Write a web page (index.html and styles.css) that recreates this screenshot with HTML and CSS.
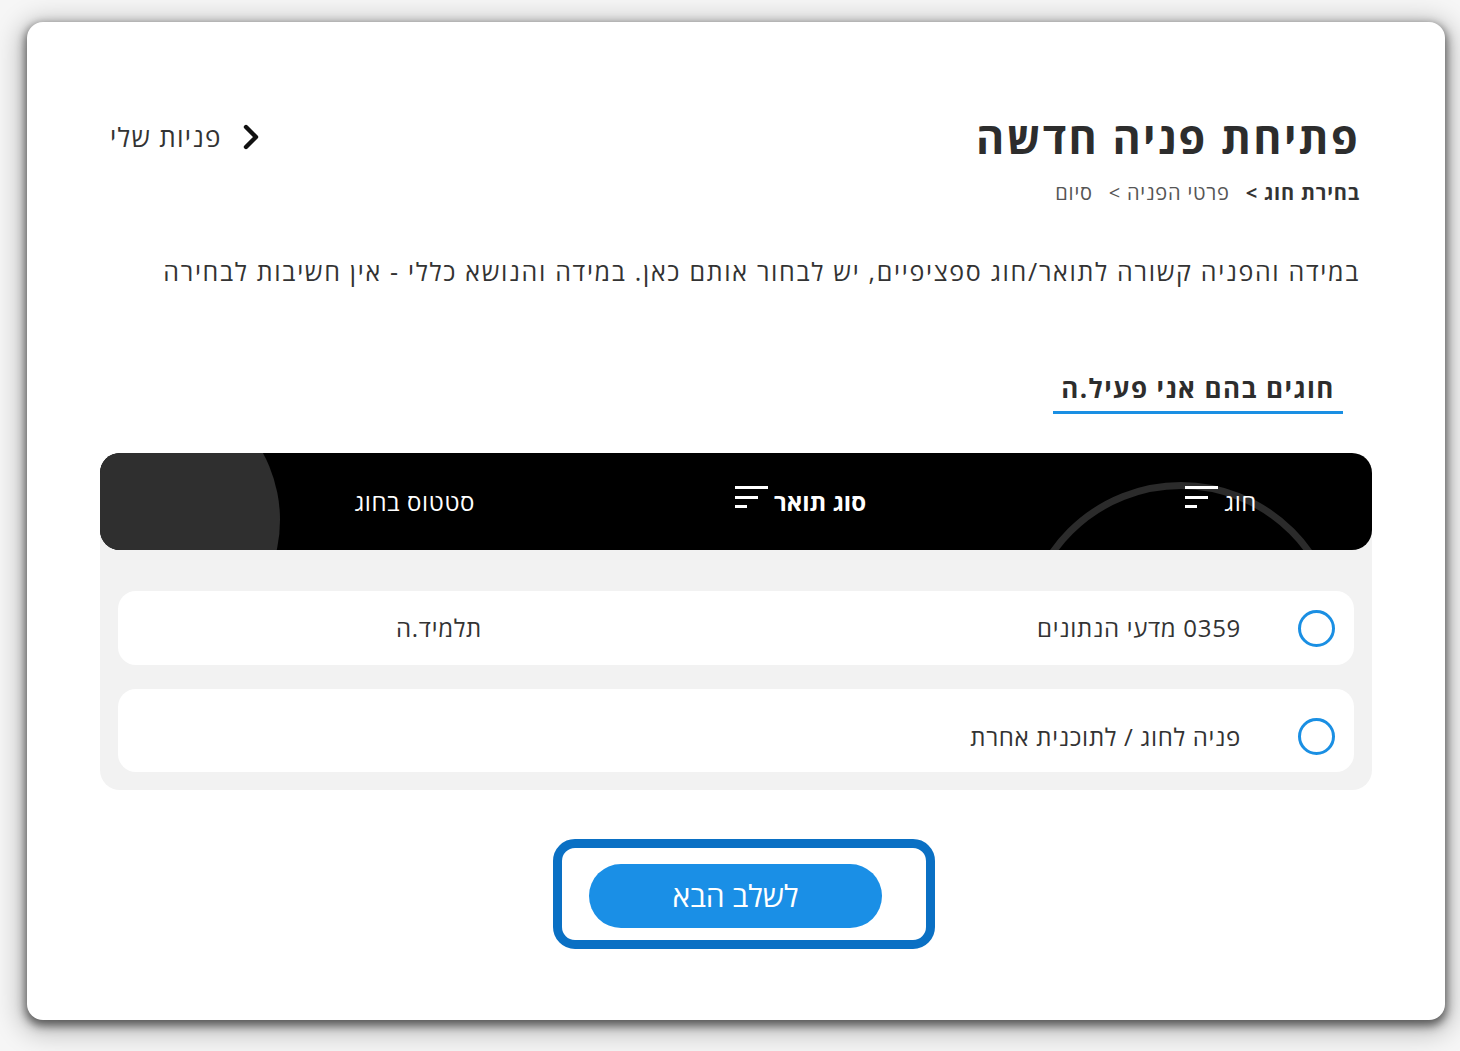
FILE: index.html
```html
<!DOCTYPE html>
<html lang="he" dir="rtl">
<head>
<meta charset="utf-8">
<title>פתיחת פניה חדשה</title>
<link rel="stylesheet" href="styles.css">
</head>
<body>
<div class="card">
  <div class="top">
    <div class="heading">
      <h1 class="title">פתיחת פניה חדשה</h1>
      <div class="crumbs">
        <span class="crumb active">בחירת חוג &gt;</span>
        <span class="crumb">פרטי הפניה &gt;</span>
        <span class="crumb">סיום</span>
      </div>
    </div>
    <a class="back">
      <svg class="chev" width="18" height="28" viewBox="0 0 18 28"><polyline points="4,4 14,14 4,24" fill="none" stroke="#111" stroke-width="4.4" stroke-linecap="round" stroke-linejoin="round"/></svg>
      <span>פניות שלי</span>
    </a>
  </div>

  <p class="desc">במידה והפניה קשורה לתואר/חוג ספציפיים, יש לבחור אותם כאן. במידה והנושא כללי - אין חשיבות לבחירה</p>

  <div class="tabs"><div class="tab">חוגים בהם אני פעיל.ה</div></div>

  <div class="table">
    <div class="thead">
      <span class="deco-fill"></span>
      <span class="deco-ring"></span>
      <div class="th">
        <span>חוג</span>
        <svg class="filter" width="34" height="22" viewBox="0 0 34 22"><rect x="0" y="0" width="33" height="3" fill="#fff"/><rect x="0" y="10" width="23" height="3" fill="#fff"/><rect x="0" y="19" width="12" height="3" fill="#fff"/></svg>
      </div>
      <div class="th bold">
        <span>סוג תואר</span>
        <svg class="filter" width="34" height="22" viewBox="0 0 34 22"><rect x="0" y="0" width="33" height="3" fill="#fff"/><rect x="0" y="10" width="23" height="3" fill="#fff"/><rect x="0" y="19" width="12" height="3" fill="#fff"/></svg>
      </div>
      <div class="th"><span>סטטוס בחוג</span></div>
    </div>
    <div class="tbody">
      <div class="row">
        <span class="radio"></span>
        <div class="cells">
          <div class="td">0359 מדעי הנתונים</div>
          <div class="td"></div>
          <div class="td">תלמיד.ה</div>
        </div>
      </div>
      <div class="row row-tall">
        <span class="radio"></span>
        <div class="cells">
          <div class="td">פניה לחוג / לתוכנית אחרת</div>
          <div class="td"></div>
          <div class="td"></div>
        </div>
      </div>
    </div>
  </div>

  <div class="actions">
    <div class="focus-ring"><button class="next">לשלב הבא</button></div>
  </div>
</div>
</body>
</html>
```

FILE: styles.css
```css
* { box-sizing: border-box; }

html, body {
  margin: 0;
  background: #f6f6f6;
}

body {
  padding: 22px 15px 31px 27px;
  font-family: "Open Sans", "DejaVu Sans", "Liberation Sans", sans-serif;
  color: #333;
}

.card {
  height: 998px;
  background: #fff;
  border-radius: 16px;
  box-shadow: 0 4px 10px 2px rgba(0, 0, 0, 0.55), 0 6px 26px 8px rgba(0, 0, 0, 0.22);
  display: flex;
  flex-direction: column;
  overflow: hidden;
}

.top {
  display: flex;
  justify-content: space-between;
  align-items: flex-start;
  padding: 90px 85px 0 83px;
}

.title {
  margin: 0;
  font-size: 43px;
  line-height: 52px;
  font-weight: 700;
  letter-spacing: 2.3px;
  color: #2d2d2d;
}

.crumbs {
  margin-top: 15px;
  font-size: 20px;
  line-height: 28px;
  letter-spacing: 0.8px;
  color: #555;
  display: flex;
  gap: 16px;
}

.crumb.active {
  font-weight: 700;
  color: #333;
}

.back {
  margin-top: 8px;
  display: flex;
  align-items: center;
  gap: 20px;
  font-size: 26px;
  line-height: 34px;
  letter-spacing: 1.3px;
  color: #333;
}

.chev { display: block; }

.desc {
  margin: 47px 0 0;
  padding: 0 85px 0 40px;
  font-size: 25px;
  line-height: 34px;
  letter-spacing: 1.7px;
  color: #333;
}

.tabs {
  margin-top: 83px;
  padding-right: 102px;
  display: flex;
}

.tab {
  width: 290px;
  text-align: center;
  font-size: 26px;
  font-weight: 700;
  line-height: 34px;
  letter-spacing: 1.4px;
  padding-bottom: 6px;
  border-bottom: 3px solid #1a8fe3;
  color: #2d2d2d;
}

.table {
  margin: 39px 73px 0;
  background: #f2f2f2;
  border-radius: 20px;
}

.thead {
  position: relative;
  overflow: hidden;
  height: 97px;
  background: #000;
  border-radius: 20px;
  display: grid;
  grid-template-columns: 391px 391px 1fr;
  align-items: center;
  padding-right: 115px;
  color: #fff;
  font-size: 24px;
  line-height: 32px;
  letter-spacing: 0.6px;
}

.deco-fill {
  position: absolute;
  left: -100px;
  top: -73px;
  width: 280px;
  height: 280px;
  border-radius: 50%;
  background: #2f2f2f;
}

.deco-ring {
  position: absolute;
  left: 921px;
  top: 29px;
  width: 320px;
  height: 320px;
  border-radius: 50%;
  border: 7px solid #2b2b2b;
}

.th {
  position: relative;
  z-index: 1;
  display: flex;
  align-items: center;
  gap: 5px;
}

.th.bold { font-weight: 700; letter-spacing: 0; }

.filter {
  display: block;
  margin-bottom: 10px;
}

.tbody {
  padding: 41px 18px 18px;
  display: flex;
  flex-direction: column;
  gap: 24px;
}

.row {
  height: 74px;
  background: #fff;
  border-radius: 18px;
  display: flex;
  align-items: center;
  padding-right: 19px;
  gap: 57px;
  font-size: 24px;
  line-height: 32px;
  letter-spacing: 0.7px;
  color: #333;
}

.row-tall {
  height: 83px;
  padding-top: 12px;
}

.radio {
  flex: none;
  width: 37px;
  height: 37px;
  border-radius: 50%;
  border: 3px solid #1a8fe3;
}

.cells {
  flex: 1;
  display: grid;
  grid-template-columns: 380px 379px 1fr;
}

.actions {
  margin-top: 49px;
  display: flex;
  justify-content: center;
}

.focus-ring {
  margin-left: 16px;
  border: 9px solid #0a70c4;
  border-radius: 22px;
  padding: 16px 44px 12px 27px;
}

.next {
  display: block;
  width: 293px;
  height: 64px;
  border: none;
  border-radius: 32px;
  background: #1a8fe6;
  color: #fff;
  font-family: "Open Sans", "DejaVu Sans", "Liberation Sans", sans-serif;
  font-size: 30px;
  line-height: 40px;
}
```
